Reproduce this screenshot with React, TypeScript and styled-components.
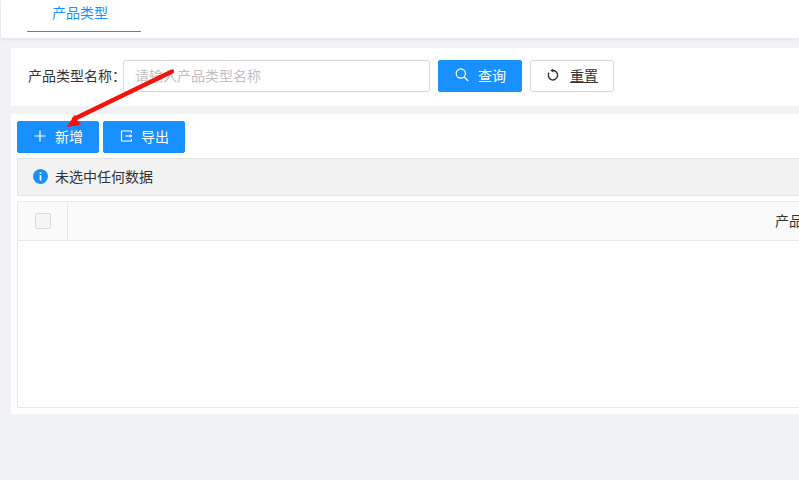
import React from 'react';
import styled, { createGlobalStyle } from 'styled-components';

const GlobalStyle = createGlobalStyle`
	html, body {
		margin: 0;
		padding: 0;
		height: 100%;
		overflow: hidden;
		background: #f0f2f5;
		font-family: 'Microsoft YaHei', 'Liberation Sans', 'Noto Sans CJK SC', sans-serif;
	}
	* {
		box-sizing: border-box;
	}
`;

const Page = styled.div`
	position: relative;
	width: 799px;
	height: 480px;
	overflow: hidden;
	background: #f0f2f5;
`;

const TopBar = styled.div`
	height: 38px;
	margin-left: 1px;
	padding-left: 26px;
	background: #fff;
	box-shadow: 0 1px 4px rgba(0, 21, 41, 0.08);
`;

const Tab = styled.div`
	width: 114px;
	height: 32px;
	padding: 4px 0 0 25px;
	font-size: 14px;
	line-height: 18px;
	color: #1890ff;
	border-bottom: 1px solid #1890ff;
`;

const Main = styled.div`
	padding: 10px 0 0 11px;
	display: flex;
	flex-direction: column;
	gap: 8px;
`;

const SearchCard = styled.div`
	height: 58px;
	width: 800px;
	padding: 12px 0 0 17px;
	display: flex;
	align-items: flex-start;
	background: #fff;
`;

const Label = styled.label`
	height: 32px;
	width: 95px;
	font-size: 14px;
	line-height: 32px;
	color: #333;
	white-space: nowrap;
`;

const SearchInput = styled.div`
	width: 307px;
	height: 32px;
	padding-left: 11px;
	margin-right: 8px;
	font-size: 14px;
	line-height: 30px;
	color: #bfbfbf;
	background: #fff;
	border: 1px solid #d9d9d9;
	border-radius: 2px;
`;

const Button = styled.button<{ $primary?: boolean; $width: number; $gap: number; $under?: boolean }>`
	width: ${props => props.$width}px;
	height: 32px;
	flex: none;
	padding: 0 0 2px;
	display: flex;
	align-items: center;
	justify-content: center;
	gap: ${props => props.$gap}px;
	font-family: inherit;
	font-size: 14px;
	color: ${props => (props.$primary ? '#fff' : '#333')};
	background: ${props => (props.$primary ? '#1890ff' : '#fff')};
	border: 1px solid ${props => (props.$primary ? '#1890ff' : '#d9d9d9')};
	border-radius: 2px;
	text-decoration: ${props => (props.$under ? 'underline' : 'none')};
`;

const SearchActions = styled.div`
	display: flex;
	gap: 8px;
`;

const TableCard = styled.div`
	height: 300px;
	width: 800px;
	padding: 7px 0 0 6px;
	background: #fff;
`;

const Toolbar = styled.div`
	display: flex;
	gap: 4px;
	margin-bottom: 5px;
`;

const Alert = styled.div`
	width: 790px;
	height: 38px;
	padding: 0 0 2px 15px;
	margin-bottom: 5px;
	display: flex;
	align-items: center;
	gap: 7px;
	font-size: 14px;
	color: #333;
	background: #f2f2f2;
	border: 1px solid #e4e4e4;
	border-right: 0;
`;

const Table = styled.div`
	width: 790px;
	height: 207px;
	border: 1px solid #e8e8e8;
	border-right: 0;
	border-radius: 2px 0 0 2px;
`;

const HeadRow = styled.div`
	height: 39px;
	display: flex;
	background: #fafafa;
	border-bottom: 1px solid #e8e8e8;
`;

const CheckCell = styled.div`
	width: 50px;
	flex: none;
	display: flex;
	align-items: center;
	justify-content: center;
	border-right: 1px solid #e8e8e8;
`;

const Checkbox = styled.span`
	display: block;
	width: 16px;
	height: 16px;
	background: #f5f5f5;
	border: 1px solid #d9d9d9;
	border-radius: 2px;
`;

const HeadCell = styled.div`
	flex: none;
	padding-left: 707px;
	font-size: 14px;
	line-height: 39px;
	color: #333;
	white-space: nowrap;
`;

const Arrow = styled.svg`
	position: absolute;
	left: 0;
	top: 0;
	pointer-events: none;
`;

const stroke = { fill: 'none', stroke: 'currentColor', strokeWidth: 1.2 };

const App: React.FC = () => (
	<Page>
		<GlobalStyle />
		<TopBar>
			<Tab>产品类型</Tab>
		</TopBar>
		<Main>
			<SearchCard>
				<Label>产品类型名称：</Label>
				<SearchInput>请输入产品类型名称</SearchInput>
				<SearchActions>
					<Button $primary $width={84} $gap={8}>
						<svg width="16" height="16" viewBox="0 0 16 16" {...stroke}>
							<circle cx="6.8" cy="6.5" r="4.6" />
							<path d="M10.2 10l4 4" />
						</svg>
						查询
					</Button>
					<Button $width={84} $gap={10} $under>
						<svg width="14" height="14" viewBox="0 0 14 14" {...stroke} strokeWidth={1.4}>
							<path d="M7 2.5A4.7 4.7 0 1 1 3 4.6" />
							<path d="M7.2 0.4v4.2L4.3 2.5z" fill="currentColor" strokeWidth={0} />
						</svg>
						重置
					</Button>
				</SearchActions>
			</SearchCard>
			<TableCard>
				<Toolbar>
					<Button $primary $width={82} $gap={8}>
						<svg width="14" height="14" viewBox="0 0 14 14" {...stroke}>
							<path d="M7 1.5v11M1.5 7h11" />
						</svg>
						新增
					</Button>
					<Button $primary $width={82} $gap={8}>
						<svg width="14" height="14" viewBox="0 0 14 14" {...stroke}>
							<path d="M12.5 4V2H2.5v10h10v-2" />
							<path d="M6.5 7h6" />
							<path d="M10.8 5.6L12.5 7l-1.7 1.4" />
						</svg>
						导出
					</Button>
				</Toolbar>
				<Alert>
					<svg width="15" height="15" viewBox="0 0 15 15">
						<circle cx="7.5" cy="7.5" r="7.5" fill="#1890ff" />
						<rect x="6.7" y="3.2" width="1.6" height="1.7" fill="#fff" />
						<rect x="6.7" y="6" width="1.6" height="5.6" fill="#fff" />
					</svg>
					未选中任何数据
				</Alert>
				<Table>
					<HeadRow>
						<CheckCell>
							<Checkbox />
						</CheckCell>
						<HeadCell>产品类型名称</HeadCell>
					</HeadRow>
				</Table>
			</TableCard>
		</Main>
		<Arrow width="799" height="480" viewBox="0 0 799 480">
			<path d="M172 71.5L74 119" fill="none" stroke="#f5120c" strokeWidth="4.4" strokeLinecap="round" />
			<path d="M66.5 127L75 114.5L77 120L81 125z" fill="#f5120c" />
		</Arrow>
	</Page>
);

export default App;
